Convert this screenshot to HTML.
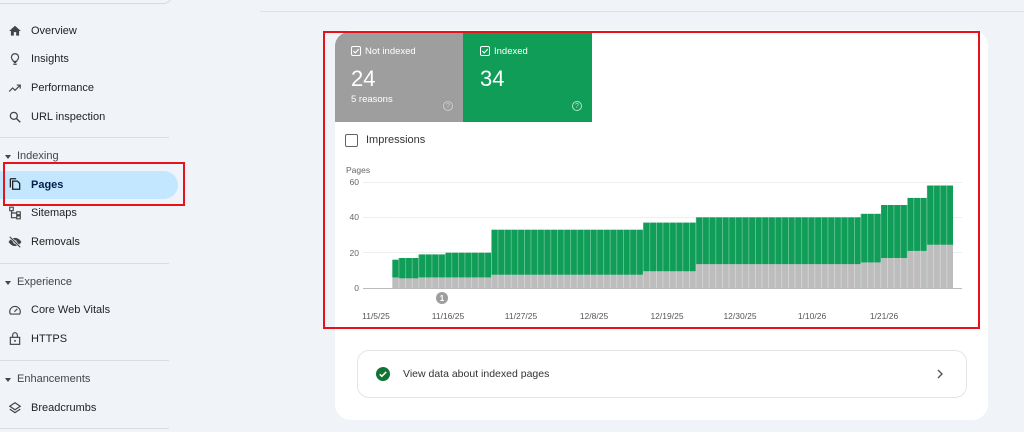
<!DOCTYPE html>
<html><head><meta charset="utf-8"><style>
*{margin:0;padding:0;box-sizing:border-box}
body{width:1024px;height:432px;overflow:hidden;background:#f0f4f9;font-family:"Liberation Sans",sans-serif;position:relative;color:#1f1f1f}
.a{position:absolute}
.nav{position:absolute;left:31px;font-size:11px;color:#1f1f1f;transform:translateY(-50%)}
.sec{position:absolute;left:17px;font-size:11px;color:#444;transform:translateY(-50%)}
.tri{position:absolute;left:5px;width:0;height:0;border-left:3px solid transparent;border-right:3px solid transparent;border-top:4px solid #444}
.div{position:absolute;left:0;width:169px;height:1px;background:#dadce0}
.ic{position:absolute;left:8px}
</style></head><body>
<div class="a" style="left:-10px;top:-20px;width:183px;height:24px;border:1px solid #d6d9de;border-radius:10px;background:#f0f4f9"></div>
<div class="a" style="left:260px;top:11px;width:764px;height:1px;background:#dde1e6"></div>

<svg class="ic" style="top:24px" width="14" height="14" viewBox="0 0 24 24"><path d="M10 20v-6h4v6h5v-8h3L12 3 2 12h3v8z" fill="#444"/></svg>
<div class="nav" style="top:31px">Overview</div>
<svg class="ic" style="top:52px" width="14" height="14" viewBox="0 0 24 24"><path d="M9 21h6M10 18h4M12 3a6 6 0 0 0-4 10.5c.7.7 1 1.5 1 2.5h6c0-1 .3-1.8 1-2.5A6 6 0 0 0 12 3z" fill="none" stroke="#444" stroke-width="2"/></svg>
<div class="nav" style="top:59px">Insights</div>
<svg class="ic" style="top:81px" width="14" height="14" viewBox="0 0 24 24"><path d="M2 18l6-6 4 4 8-8M15 7h6v6" fill="none" stroke="#444" stroke-width="2"/></svg>
<div class="nav" style="top:88px">Performance</div>
<svg class="ic" style="top:110px" width="14" height="14" viewBox="0 0 24 24"><circle cx="10" cy="10" r="6" fill="none" stroke="#444" stroke-width="2.2"/><path d="M14.5 14.5L21 21" stroke="#444" stroke-width="2.4"/></svg>
<div class="nav" style="top:117px">URL inspection</div>
<div class="div" style="top:137px"></div>
<div class="tri" style="top:155px"></div><div class="sec" style="top:156px">Indexing</div>
<div class="a" style="left:0;top:171px;width:178px;height:28px;background:#c2e7ff;border-radius:0 14px 14px 0"></div>
<svg class="ic" style="top:177px" width="14" height="14" viewBox="0 0 24 24"><path d="M4 3v15M4 3h10M8 7h8l4 4v10H8z" fill="none" stroke="#1f1f1f" stroke-width="2.2"/></svg>
<div class="nav" style="top:185px;font-weight:bold;color:#041e49">Pages</div>
<div class="a" style="left:3px;top:162px;width:182px;height:44px;border:2px solid #e8121a"></div>
<svg class="ic" style="top:206px" width="14" height="14" viewBox="0 0 24 24"><path d="M3 2h6v6H3zM15 10h6v5h-6zM15 17h6v5h-6zM6 8v12h9M6 12h9" fill="none" stroke="#444" stroke-width="2"/></svg>
<div class="nav" style="top:213px">Sitemaps</div>
<svg class="ic" style="top:235px" width="14" height="14" viewBox="0 0 24 24"><path d="M1 12s4-7 11-7 11 7 11 7-4 7-11 7S1 12 1 12z" fill="#444"/><circle cx="12" cy="12" r="3" fill="#f0f4f9"/><path d="M3 3l18 18" stroke="#f0f4f9" stroke-width="4"/><path d="M3 3l18 18" stroke="#444" stroke-width="2"/></svg>
<div class="nav" style="top:242px">Removals</div>
<div class="div" style="top:263px"></div>
<div class="tri" style="top:281px"></div><div class="sec" style="top:282px">Experience</div>
<svg class="ic" style="top:303px" width="14" height="14" viewBox="0 0 24 24"><path d="M4 19a9 9 0 1 1 16 0z" fill="none" stroke="#444" stroke-width="2"/><path d="M11 15l5-5" stroke="#444" stroke-width="2"/></svg>
<div class="nav" style="top:310px">Core Web Vitals</div>
<svg class="ic" style="top:331px" width="14" height="15" viewBox="0 0 24 24"><rect x="4" y="10" width="16" height="12" fill="none" stroke="#444" stroke-width="2"/><path d="M8 10V6a4 4 0 0 1 8 0v4" fill="none" stroke="#444" stroke-width="2"/><circle cx="12" cy="16" r="1.6" fill="#444"/></svg>
<div class="nav" style="top:339px">HTTPS</div>
<div class="div" style="top:360px"></div>
<div class="tri" style="top:378px"></div><div class="sec" style="top:379px">Enhancements</div>
<svg class="ic" style="top:401px" width="14" height="14" viewBox="0 0 24 24"><path d="M12 3l9 6-9 6-9-6zM3 14l9 6 9-6" fill="none" stroke="#444" stroke-width="2"/></svg>
<div class="nav" style="top:408px">Breadcrumbs</div>
<div class="div" style="top:428px"></div>

<div class="a" style="left:335px;top:30px;width:653px;height:390px;background:#fff;border-radius:16px"></div>
<div class="a" style="left:335px;top:32px;width:128px;height:90px;background:#9e9e9e;border-top-left-radius:14px"></div>
<div class="a" style="left:463px;top:32px;width:129px;height:90px;background:#0f9d58"></div>
<svg class="a" style="left:351px;top:46px" width="10" height="10" viewBox="0 0 10 10"><rect x="0.5" y="0.5" width="9" height="9" rx="1.5" fill="none" stroke="#fff"/><path d="M2.3 5l1.9 1.9 3.6-3.8" fill="none" stroke="#fff" stroke-width="1.1"/></svg>
<div class="a" style="left:365px;top:46px;font-size:9.5px;color:#fff">Not indexed</div>
<div class="a" style="left:351px;top:66px;font-size:22px;color:#fff">24</div>
<div class="a" style="left:351px;top:94px;font-size:9.5px;color:#fff">5 reasons</div>
<div class="a" style="left:443px;top:101px;width:10px;height:10px;border:1px solid #ccc;border-radius:50%;font-size:7px;color:#ccc;text-align:center;line-height:9px">?</div>
<svg class="a" style="left:480px;top:46px" width="10" height="10" viewBox="0 0 10 10"><rect x="0.5" y="0.5" width="9" height="9" rx="1.5" fill="none" stroke="#fff"/><path d="M2.3 5l1.9 1.9 3.6-3.8" fill="none" stroke="#fff" stroke-width="1.1"/></svg>
<div class="a" style="left:494px;top:46px;font-size:9.5px;color:#fff">Indexed</div>
<div class="a" style="left:480px;top:66px;font-size:22px;color:#fff">34</div>
<div class="a" style="left:572px;top:101px;width:10px;height:10px;border:1px solid #b8e0c8;border-radius:50%;font-size:7px;color:#b8e0c8;text-align:center;line-height:9px">?</div>
<div class="a" style="left:345px;top:134px;width:13px;height:13px;border:1.5px solid #5f6368;border-radius:2px"></div>
<div class="a" style="left:366px;top:134px;font-size:11px;color:#333">Impressions</div>

<svg class="a" style="left:0;top:0" width="1024" height="432">
<defs><pattern id="p" x="392" y="0" width="6.6" height="10" patternUnits="userSpaceOnUse"><rect x="0" y="0" width="0.7" height="10" fill="rgba(255,255,255,0.45)"/></pattern></defs>
<g font-family="Liberation Sans" font-size="8.5" fill="#666">
<text x="346" y="173">Pages</text>
<text x="359" y="185" text-anchor="end">60</text><text x="359" y="220" text-anchor="end">40</text><text x="359" y="256" text-anchor="end">20</text><text x="359" y="291" text-anchor="end">0</text>
</g>
<g stroke="#eee" stroke-width="1"><line x1="363" y1="182.5" x2="962" y2="182.5"/><line x1="363" y1="217.5" x2="962" y2="217.5"/><line x1="363" y1="252.5" x2="962" y2="252.5"/></g>
<g fill="#0f9d58">
<rect x="392" y="259.7" width="6.5" height="28.3"/>
<rect x="398.5" y="258" width="19.9" height="30"/>
<rect x="418.4" y="254.4" width="26.9" height="33.6"/>
<rect x="445.3" y="252.7" width="46" height="35.3"/>
<rect x="491.3" y="229.7" width="151.7" height="58.3"/>
<rect x="643" y="222.6" width="52.9" height="65.4"/>
<rect x="695.9" y="217.3" width="164.7" height="70.7"/>
<rect x="860.6" y="213.8" width="20.4" height="74.2"/>
<rect x="881" y="205" width="26.4" height="83"/>
<rect x="907.4" y="197.9" width="19.5" height="90.1"/>
<rect x="926.9" y="185.5" width="26.1" height="102.5"/>
</g>
<g fill="#bdbdbd">
<rect x="392" y="277.4" width="6.5" height="10.6"/>
<rect x="398.5" y="278.3" width="19.9" height="9.7"/>
<rect x="418.4" y="277.4" width="26.9" height="10.6"/>
<rect x="445.3" y="277.4" width="46" height="10.6"/>
<rect x="491.3" y="274.7" width="151.7" height="13.3"/>
<rect x="643" y="271.2" width="52.9" height="16.8"/>
<rect x="695.9" y="264.1" width="164.7" height="23.9"/>
<rect x="860.6" y="262.4" width="20.4" height="25.6"/>
<rect x="881" y="258" width="26.4" height="30"/>
<rect x="907.4" y="250.9" width="19.5" height="37.1"/>
<rect x="926.9" y="244.7" width="26.1" height="43.3"/>
</g>
<rect x="392" y="185" width="561" height="103" fill="url(#p)"/>
<line x1="363" y1="288.5" x2="962" y2="288.5" stroke="#bbb"/>
<circle cx="442" cy="298" r="6" fill="#9e9e9e"/><text x="442" y="301" font-family="Liberation Sans" font-size="8" fill="#fff" text-anchor="middle" font-weight="bold">1</text>
<g font-family="Liberation Sans" font-size="8.5" fill="#555" text-anchor="middle">
<text x="376" y="319">11/5/25</text><text x="448" y="319">11/16/25</text><text x="521" y="319">11/27/25</text><text x="594" y="319">12/8/25</text><text x="667" y="319">12/19/25</text><text x="740" y="319">12/30/25</text><text x="812" y="319">1/10/26</text><text x="884" y="319">1/21/26</text>
</g>
</svg>
<div class="a" style="left:323px;top:31px;width:657px;height:298px;border:2px solid #e8121a"></div>

<div class="a" style="left:357px;top:350px;width:610px;height:48px;border:1px solid #e2e4e8;border-radius:12px;background:#fff"></div>
<svg class="a" style="left:376px;top:367px" width="14" height="14" viewBox="0 0 24 24"><circle cx="12" cy="12" r="12" fill="#137333"/><path d="M6.5 12.5l3.5 3.5 7.5-7.5" fill="none" stroke="#fff" stroke-width="2.6"/></svg>
<div class="a" style="left:403px;top:368px;font-size:10.5px;color:#333">View data about indexed pages</div>
<svg class="a" style="left:936px;top:369px" width="8" height="10" viewBox="0 0 8 10"><path d="M2 1l4 4-4 4" fill="none" stroke="#555" stroke-width="1.4"/></svg>
</body></html>
